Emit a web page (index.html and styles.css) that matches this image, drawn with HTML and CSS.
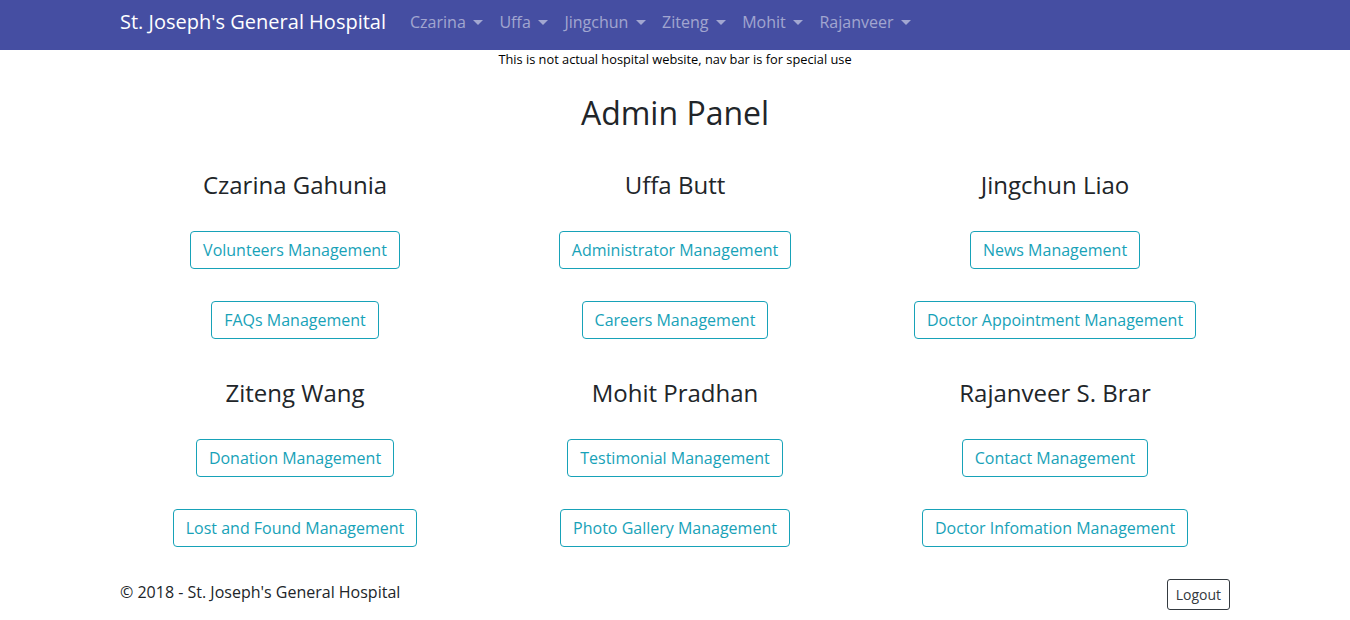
FILE: index.html
```html
<!DOCTYPE html>
<html lang="en">
<head>
<meta charset="utf-8">
<title>Admin Panel</title>
<link rel="stylesheet" href="styles.css">
</head>
<body>
<nav class="navbar">
  <div class="container nav-inner">
    <a class="brand" href="#">St. Joseph's General Hospital</a>
    <ul class="nav-links">
      <li><a href="#" class="dropdown">Czarina</a></li>
      <li><a href="#" class="dropdown">Uffa</a></li>
      <li><a href="#" class="dropdown">Jingchun</a></li>
      <li><a href="#" class="dropdown">Ziteng</a></li>
      <li><a href="#" class="dropdown">Mohit</a></li>
      <li><a href="#" class="dropdown">Rajanveer</a></li>
    </ul>
  </div>
</nav>
<p class="notice">This is not actual hospital website, nav bar is for special use</p>
<main class="container">
  <h2 class="title">Admin Panel</h2>
  <div class="grid">
    <section class="col">
      <h3>Czarina Gahunia</h3>
      <a class="btn btn-info" href="#">Volunteers Management</a>
      <a class="btn btn-info" href="#">FAQs Management</a>
    </section>
    <section class="col">
      <h3>Uffa Butt</h3>
      <a class="btn btn-info" href="#">Administrator Management</a>
      <a class="btn btn-info" href="#">Careers Management</a>
    </section>
    <section class="col">
      <h3>Jingchun Liao</h3>
      <a class="btn btn-info" href="#">News Management</a>
      <a class="btn btn-info" href="#">Doctor Appointment Management</a>
    </section>
    <section class="col">
      <h3>Ziteng Wang</h3>
      <a class="btn btn-info" href="#">Donation Management</a>
      <a class="btn btn-info" href="#">Lost and Found Management</a>
    </section>
    <section class="col">
      <h3>Mohit Pradhan</h3>
      <a class="btn btn-info" href="#">Testimonial Management</a>
      <a class="btn btn-info" href="#">Photo Gallery Management</a>
    </section>
    <section class="col">
      <h3>Rajanveer S. Brar</h3>
      <a class="btn btn-info" href="#">Contact Management</a>
      <a class="btn btn-info" href="#">Doctor Infomation Management</a>
    </section>
  </div>
  <footer class="footer">
    <p>&copy; 2018 - St. Joseph's General Hospital</p>
    <a class="btn btn-dark-sm" href="#">Logout</a>
  </footer>
</main>
</body>
</html>
```
FILE: styles.css
```css
* { box-sizing: border-box; }
html, body { margin: 0; padding: 0; }
body {
  font-family: "Open Sans", "Liberation Sans", sans-serif;
  font-size: 16px;
  line-height: 1.5;
  color: #212529;
  background: #fff;
}
a { text-decoration: none; }
.container {
  width: 1140px;
  margin: 0 auto;
  padding: 0 15px;
}
.navbar {
  background: #454ea2;
  height: 50px;
}
.nav-inner {
  display: flex;
  align-items: center;
  height: 50px;
  padding-bottom: 6px;
}
.brand {
  color: #fff;
  font-size: 20px;
  line-height: 30px;
  margin-right: 16px;
  white-space: nowrap;
}
.nav-links {
  display: flex;
  list-style: none;
  margin: 0;
  padding: 0;
}
.nav-links a {
  display: block;
  color: rgba(255,255,255,.5);
  padding: 8px 8px;
  line-height: 24px;
}
.dropdown::after {
  content: "";
  display: inline-block;
  margin-left: 7.7px;
  vertical-align: 3px;
  border-top: 5px solid;
  border-left: 5px solid transparent;
  border-right: 5px solid transparent;
}
.notice {
  margin: 0;
  text-align: center;
  font-size: 12.8px;
  line-height: 19px;
  color: #000;
}
.title {
  margin: 25px 0 0;
  font-size: 32px;
  font-weight: 400;
  line-height: 38px;
  text-align: center;
}
.grid {
  display: grid;
  grid-template-columns: repeat(3, 1fr);
  row-gap: 23px;
  margin: 0 -15px;
  padding-top: 22px;
}
.col {
  display: flex;
  flex-direction: column;
  align-items: center;
  padding: 0 15px;
}
.col h3 {
  margin: 16px 0 0;
  font-size: 24px;
  font-weight: 400;
  line-height: 29px;
}
.btn {
  display: inline-block;
  border: 1px solid transparent;
  border-radius: 4px;
  white-space: nowrap;
}
.btn-info {
  color: #17a2b8;
  border-color: #17a2b8;
  padding: 6px 12px;
  font-size: 16px;
  line-height: 24px;
  margin-top: 32px;
}
.footer {
  display: flex;
  justify-content: space-between;
  align-items: flex-start;
  margin-top: 32px;
}
.footer p {
  margin: 0;
  padding-top: 1px;
  line-height: 24px;
}
.btn-dark-sm {
  color: #343a40;
  border-color: #343a40;
  padding: 4px 8px;
  font-size: 14px;
  line-height: 21px;
  border-radius: 3px;
}
```
